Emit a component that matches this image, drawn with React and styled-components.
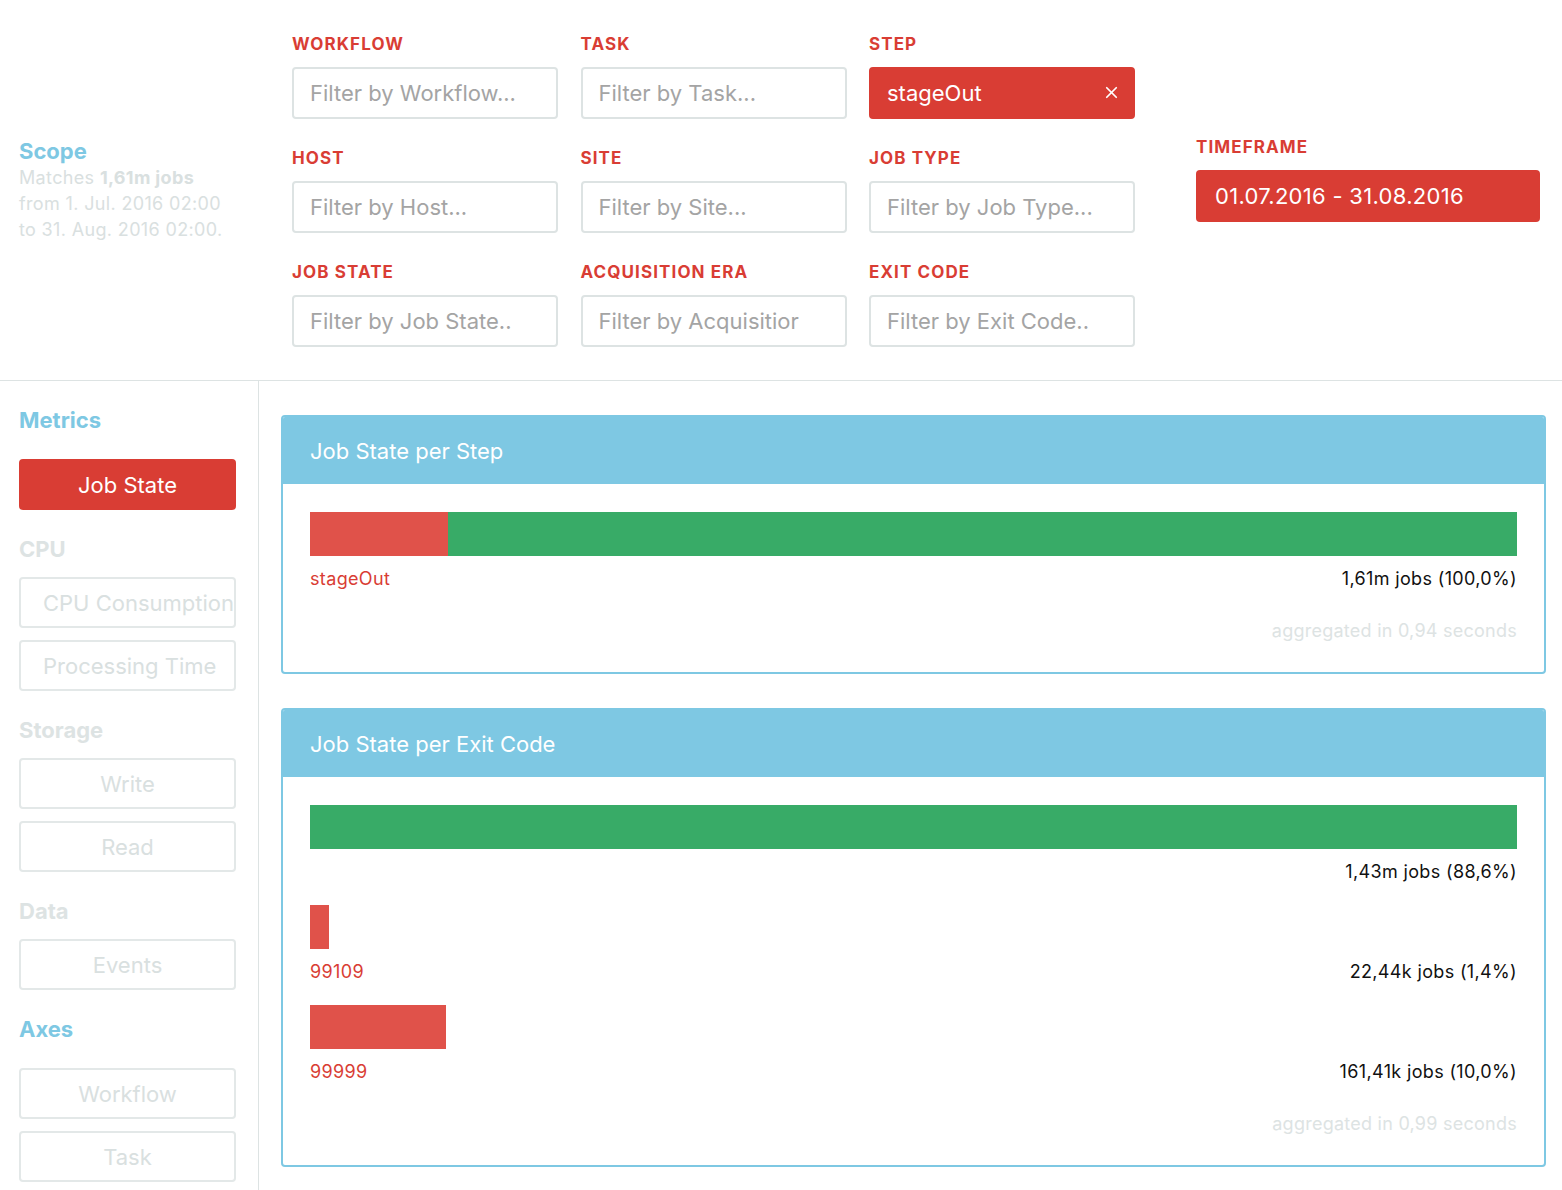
import React from "react";
import styled, { createGlobalStyle } from "styled-components";
import { X } from "lucide-react";

const GlobalStyle = createGlobalStyle`
  body {
    margin: 0;
    font-family: Inter, "Open Sans", sans-serif;
    background: #fff;
  }
  * { box-sizing: border-box; }
`;

const RED = "#d93d34";
const BLUE = "#7ec8e3";
const LINE = "#dde3e3";
const MUTED = "#d9e0e0";

const Page = styled.div`
  width: 1562px;
`;

const TopBar = styled.header`
  display: flex;
  align-items: center;
  height: 381px;
  border-bottom: 1px solid ${LINE};
`;

const ScopeBox = styled.div`
  width: 292px;
  padding-left: 19px;
`;

const BlueHeading = styled.h3`
  margin: 0;
  font-size: 22px;
  line-height: 28px;
  font-weight: 700;
  color: ${BLUE};
`;

const ScopeText = styled.p`
  margin: 0;
  font-size: 18px;
  line-height: 26px;
  letter-spacing: 0.35px;
  color: ${MUTED};
  b { font-weight: 700; }
`;

const FilterGrid = styled.div`
  display: grid;
  grid-template-columns: repeat(3, 266px);
  column-gap: 22.5px;
  row-gap: 29px;
`;

const Field = styled.div`
  display: flex;
  flex-direction: column;
`;

const Label = styled.label`
  font-size: 17px;
  line-height: 20px;
  font-weight: 700;
  letter-spacing: 1.1px;
  color: ${RED};
  margin-bottom: 13px;
`;

const Input = styled.div`
  display: flex;
  align-items: center;
  justify-content: space-between;
  height: 52px;
  padding: 0 12px 0 16px;
  border-radius: 4px;
  border: 2px solid ${(p) => (p.$active ? RED : LINE)};
  background: ${(p) => (p.$active ? RED : "#fff")};
  color: ${(p) => (p.$active ? "#fff" : "#a4a4a4")};
  font-size: 22px;
  white-space: nowrap;
  overflow: hidden;
`;

const TimeBox = styled.div`
  margin-left: 61px;
  margin-bottom: 22px;
  display: flex;
  flex-direction: column;
  width: 344px;
`;

const DateButton = styled.div`
  height: 52px;
  display: flex;
  align-items: center;
  padding: 0 19px;
  background: ${RED};
  border-radius: 4px;
  color: #fff;
  font-size: 22px;
  letter-spacing: 0.3px;
`;

const Body = styled.div`
  display: flex;
  align-items: flex-start;
`;

const Sidebar = styled.aside`
  width: 259px;
  min-height: 820px;
  border-right: 1px solid ${LINE};
  padding: 25px 22px 0 19px;
  display: flex;
  flex-direction: column;
`;

const GroupHeading = styled.h3`
  margin: ${(p) => (p.$first ? "0" : "25px")} 0 ${(p) => (p.$blue ? "25px" : "14px")};
  font-size: 22px;
  line-height: 28px;
  font-weight: 700;
  color: ${(p) => (p.$blue ? BLUE : LINE)};
`;

const NavGroup = styled.div`
  display: flex;
  flex-direction: column;
  gap: 12px;
`;

const NavButton = styled.button`
  height: 51px;
  width: 217px;
  padding: 0 ${(p) => (p.$wide ? "0" : "22px")} 0 22px;
  border-radius: 4px;
  border: 2px solid ${(p) => (p.$active ? RED : "#e3e8e8")};
  background: ${(p) => (p.$active ? RED : "#fff")};
  color: ${(p) => (p.$active ? "#fff" : MUTED)};
  font-family: inherit;
  font-size: 22px;
  text-align: ${(p) => (p.$wide ? "left" : "center")};
  white-space: nowrap;
  overflow: hidden;
`;

const Main = styled.main`
  flex: 1;
  padding: 34px 16px 40px 22px;
  display: flex;
  flex-direction: column;
  gap: 34px;
`;

const Card = styled.section`
  border: 2px solid ${BLUE};
  border-radius: 4px;
  overflow: hidden;
`;

const CardHeader = styled.div`
  height: 69px;
  margin: -2px -2px 0;
  padding: 2px 0 0 29px;
  background: ${BLUE};
  color: #fff;
  font-size: 22px;
  display: flex;
  align-items: center;
`;

const CardBody = styled.div`
  padding: 28px 27px 30px;
  display: flex;
  flex-direction: column;
  gap: 22px;
`;

const Row = styled.div`
  display: flex;
  flex-direction: column;
`;

const Track = styled.div`
  display: flex;
  height: 44px;
`;

const Segment = styled.div`
  height: 100%;
  background: ${(p) => (p.$ok ? "#38ab67" : "#e0524a")};
`;

const RowLabels = styled.div`
  display: flex;
  justify-content: space-between;
  margin-top: 12px;
  font-size: 18px;
  line-height: 22px;
  letter-spacing: 0.35px;
`;

const Name = styled.span`
  color: ${RED};
`;

const Count = styled.span`
  color: #111;
`;

const Footnote = styled.div`
  text-align: right;
  font-size: 18px;
  line-height: 22px;
  letter-spacing: 0.25px;
  color: ${LINE};
  margin-top: 8px;
`;

const filters = [
  { label: "WORKFLOW", text: "Filter by Workflow..." },
  { label: "TASK", text: "Filter by Task..." },
  { label: "STEP", text: "stageOut", active: true },
  { label: "HOST", text: "Filter by Host..." },
  { label: "SITE", text: "Filter by Site..." },
  { label: "JOB TYPE", text: "Filter by Job Type..." },
  { label: "JOB STATE", text: "Filter by Job State.." },
  { label: "ACQUISITION ERA", text: "Filter by Acquisitior" },
  { label: "EXIT CODE", text: "Filter by Exit Code.." },
];

const groups = [
  { title: "Metrics", blue: true, items: [{ name: "Job State", active: true }] },
  { title: "CPU", items: [{ name: "CPU Consumption", wide: true }, { name: "Processing Time" }] },
  { title: "Storage", items: [{ name: "Write" }, { name: "Read" }] },
  { title: "Data", items: [{ name: "Events" }] },
  { title: "Axes", blue: true, items: [{ name: "Workflow" }, { name: "Task" }] },
];

const charts = [
  {
    title: "Job State per Step",
    rows: [{ name: "stageOut", count: "1,61m jobs (100,0%)", parts: [[false, 11.45], [true, 88.55]] }],
    time: "0,94",
  },
  {
    title: "Job State per Exit Code",
    rows: [
      { name: "", count: "1,43m jobs (88,6%)", parts: [[true, 100]] },
      { name: "99109", count: "22,44k jobs (1,4%)", parts: [[false, 1.6]] },
      { name: "99999", count: "161,41k jobs (10,0%)", parts: [[false, 11.3]] },
    ],
    time: "0,99",
  },
];

const App = () => {
  return (
    <Page>
      <GlobalStyle />
      <TopBar>
        <ScopeBox>
          <BlueHeading>Scope</BlueHeading>
          <ScopeText>
            Matches <b>1,61m jobs</b>
            <br />
            from 1. Jul. 2016 02:00
            <br />
            to 31. Aug. 2016 02:00.
          </ScopeText>
        </ScopeBox>
        <FilterGrid>
          {filters.map((f) => (
            <Field key={f.label}>
              <Label>{f.label}</Label>
              <Input $active={f.active}>
                {f.text}
                {f.active && <X size={19} strokeWidth={2.2} />}
              </Input>
            </Field>
          ))}
        </FilterGrid>
        <TimeBox>
          <Label>TIMEFRAME</Label>
          <DateButton>01.07.2016 - 31.08.2016</DateButton>
        </TimeBox>
      </TopBar>
      <Body>
        <Sidebar>
          {groups.map((g, i) => (
            <React.Fragment key={g.title}>
              <GroupHeading $first={i === 0} $blue={g.blue}>
                {g.title}
              </GroupHeading>
              <NavGroup>
                {g.items.map((it) => (
                  <NavButton key={it.name} $active={it.active} $wide={it.wide}>
                    {it.name}
                  </NavButton>
                ))}
              </NavGroup>
            </React.Fragment>
          ))}
        </Sidebar>
        <Main>
          {charts.map((c) => (
            <Card key={c.title}>
              <CardHeader>{c.title}</CardHeader>
              <CardBody>
                {c.rows.map((r, i) => (
                  <Row key={i}>
                    <Track>
                      {r.parts.map(([ok, w], j) => (
                        <Segment key={j} $ok={ok} style={{ width: `${w}%` }} />
                      ))}
                    </Track>
                    <RowLabels>
                      <Name>{r.name}</Name>
                      <Count>{r.count}</Count>
                    </RowLabels>
                  </Row>
                ))}
                <Footnote>aggregated in {c.time} seconds</Footnote>
              </CardBody>
            </Card>
          ))}
        </Main>
      </Body>
    </Page>
  );
};

export default App;
